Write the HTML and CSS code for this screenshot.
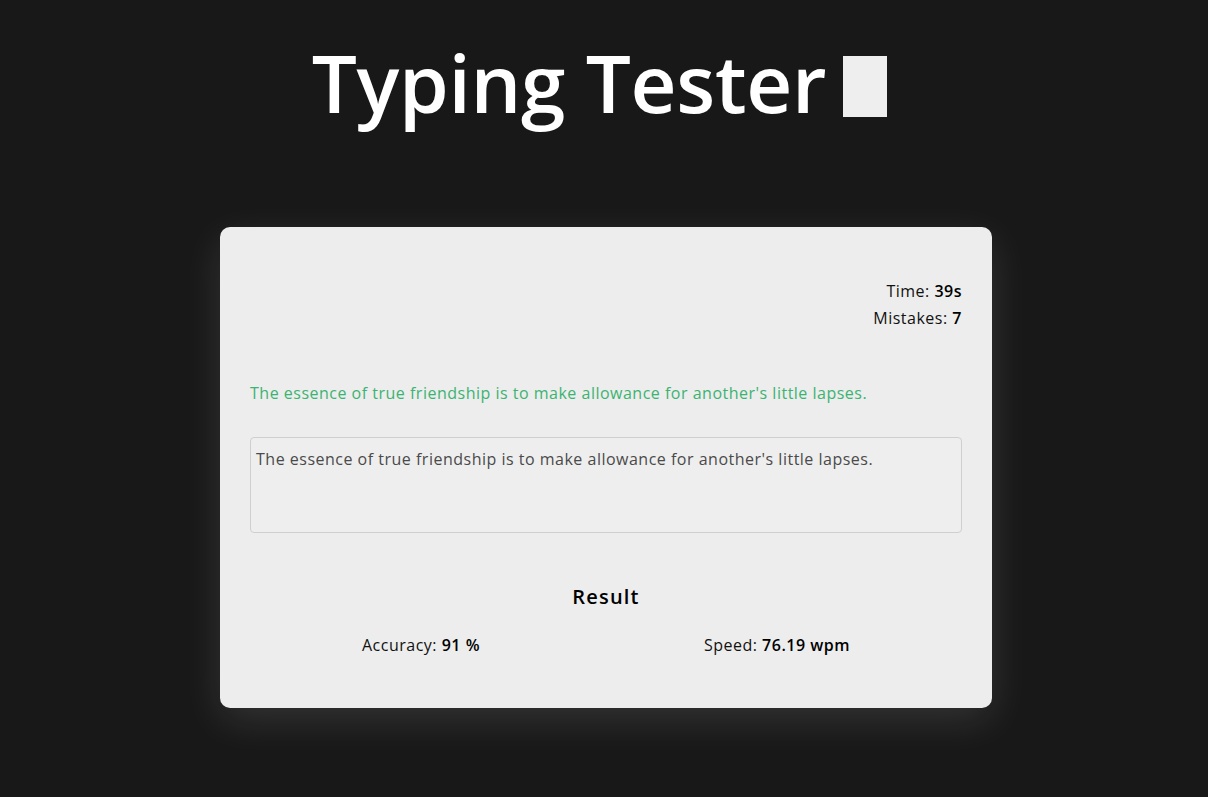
FILE: index.html
```html
<!DOCTYPE html>
<html lang="en">
<head>
<meta charset="utf-8">
<title>Typing Tester</title>
<link rel="stylesheet" href="styles.css">
</head>
<body>
<header class="header">
  <h1 class="title">Typing Tester<span class="cursor"></span></h1>
</header>
<main class="card">
  <div class="stats">
    <p class="stat">Time: <b>39s</b></p>
    <p class="stat">Mistakes: <b>7</b></p>
  </div>
  <p class="quote">The essence of true friendship is to make allowance for another's little lapses.</p>
  <textarea class="input" readonly>The essence of true friendship is to make allowance for another's little lapses.</textarea>
  <section class="result">
    <h2 class="result-title">Result</h2>
    <div class="result-row">
      <p class="stat">Accuracy: <b>91 %</b></p>
      <p class="stat">Speed: <b>76.19 wpm</b></p>
    </div>
  </section>
</main>
</body>
</html>
```
FILE: styles.css
```css
* { box-sizing: border-box; }
html, body { margin: 0; padding: 0; }
body {
  background: #181818;
  font-family: "Open Sans", "DejaVu Sans", sans-serif;
  color: #111;
  min-height: 797px;
  padding-left: 4px;
}
.header {
  padding-top: 42px;
  display: flex;
  justify-content: center;
}
.title {
  margin: 0;
  font-size: 80px;
  line-height: 80px;
  font-weight: 600;
  color: #ffffff;
  letter-spacing: -0.3px;
}
.cursor {
  display: inline-block;
  width: 44px;
  height: 61px;
  margin-left: 17px;
  margin-right: 13px;
  background: #eeeeee;
  vertical-align: -4px;
}
.card {
  width: 772px;
  margin: 105px auto 0;
  padding: 30px;
  background: #ededed;
  border-radius: 10px;
  box-shadow: 0 12px 40px rgba(255, 255, 255, 0.12);
  font-size: 16px;
  line-height: 27px;
  letter-spacing: 0.5px;
}
.stats {
  margin-top: 21px;
  text-align: right;
}
.stat { margin: 0; }
.stat b { font-weight: 600; color: #000; }
.quote {
  margin: 48px 0 0;
  color: #3cb371;
}
.input {
  display: block;
  width: 100%;
  height: 96px;
  margin-top: 30px;
  padding: 8px 5px;
  border: 1px solid #cfcfcf;
  border-radius: 4px;
  background: #eeeeee;
  color: #4a4a4a;
  font: inherit;
  letter-spacing: inherit;
  line-height: 27px;
  resize: none;
  outline: none;
}
.result { margin-top: 49px; }
.result-title {
  margin: 0;
  text-align: center;
  font-size: 20px;
  line-height: 30px;
  font-weight: 600;
  color: #000;
  letter-spacing: 1.2px;
}
.result-row {
  margin-top: 20px;
  display: flex;
  justify-content: space-around;
  padding-bottom: 19px;
}
```
